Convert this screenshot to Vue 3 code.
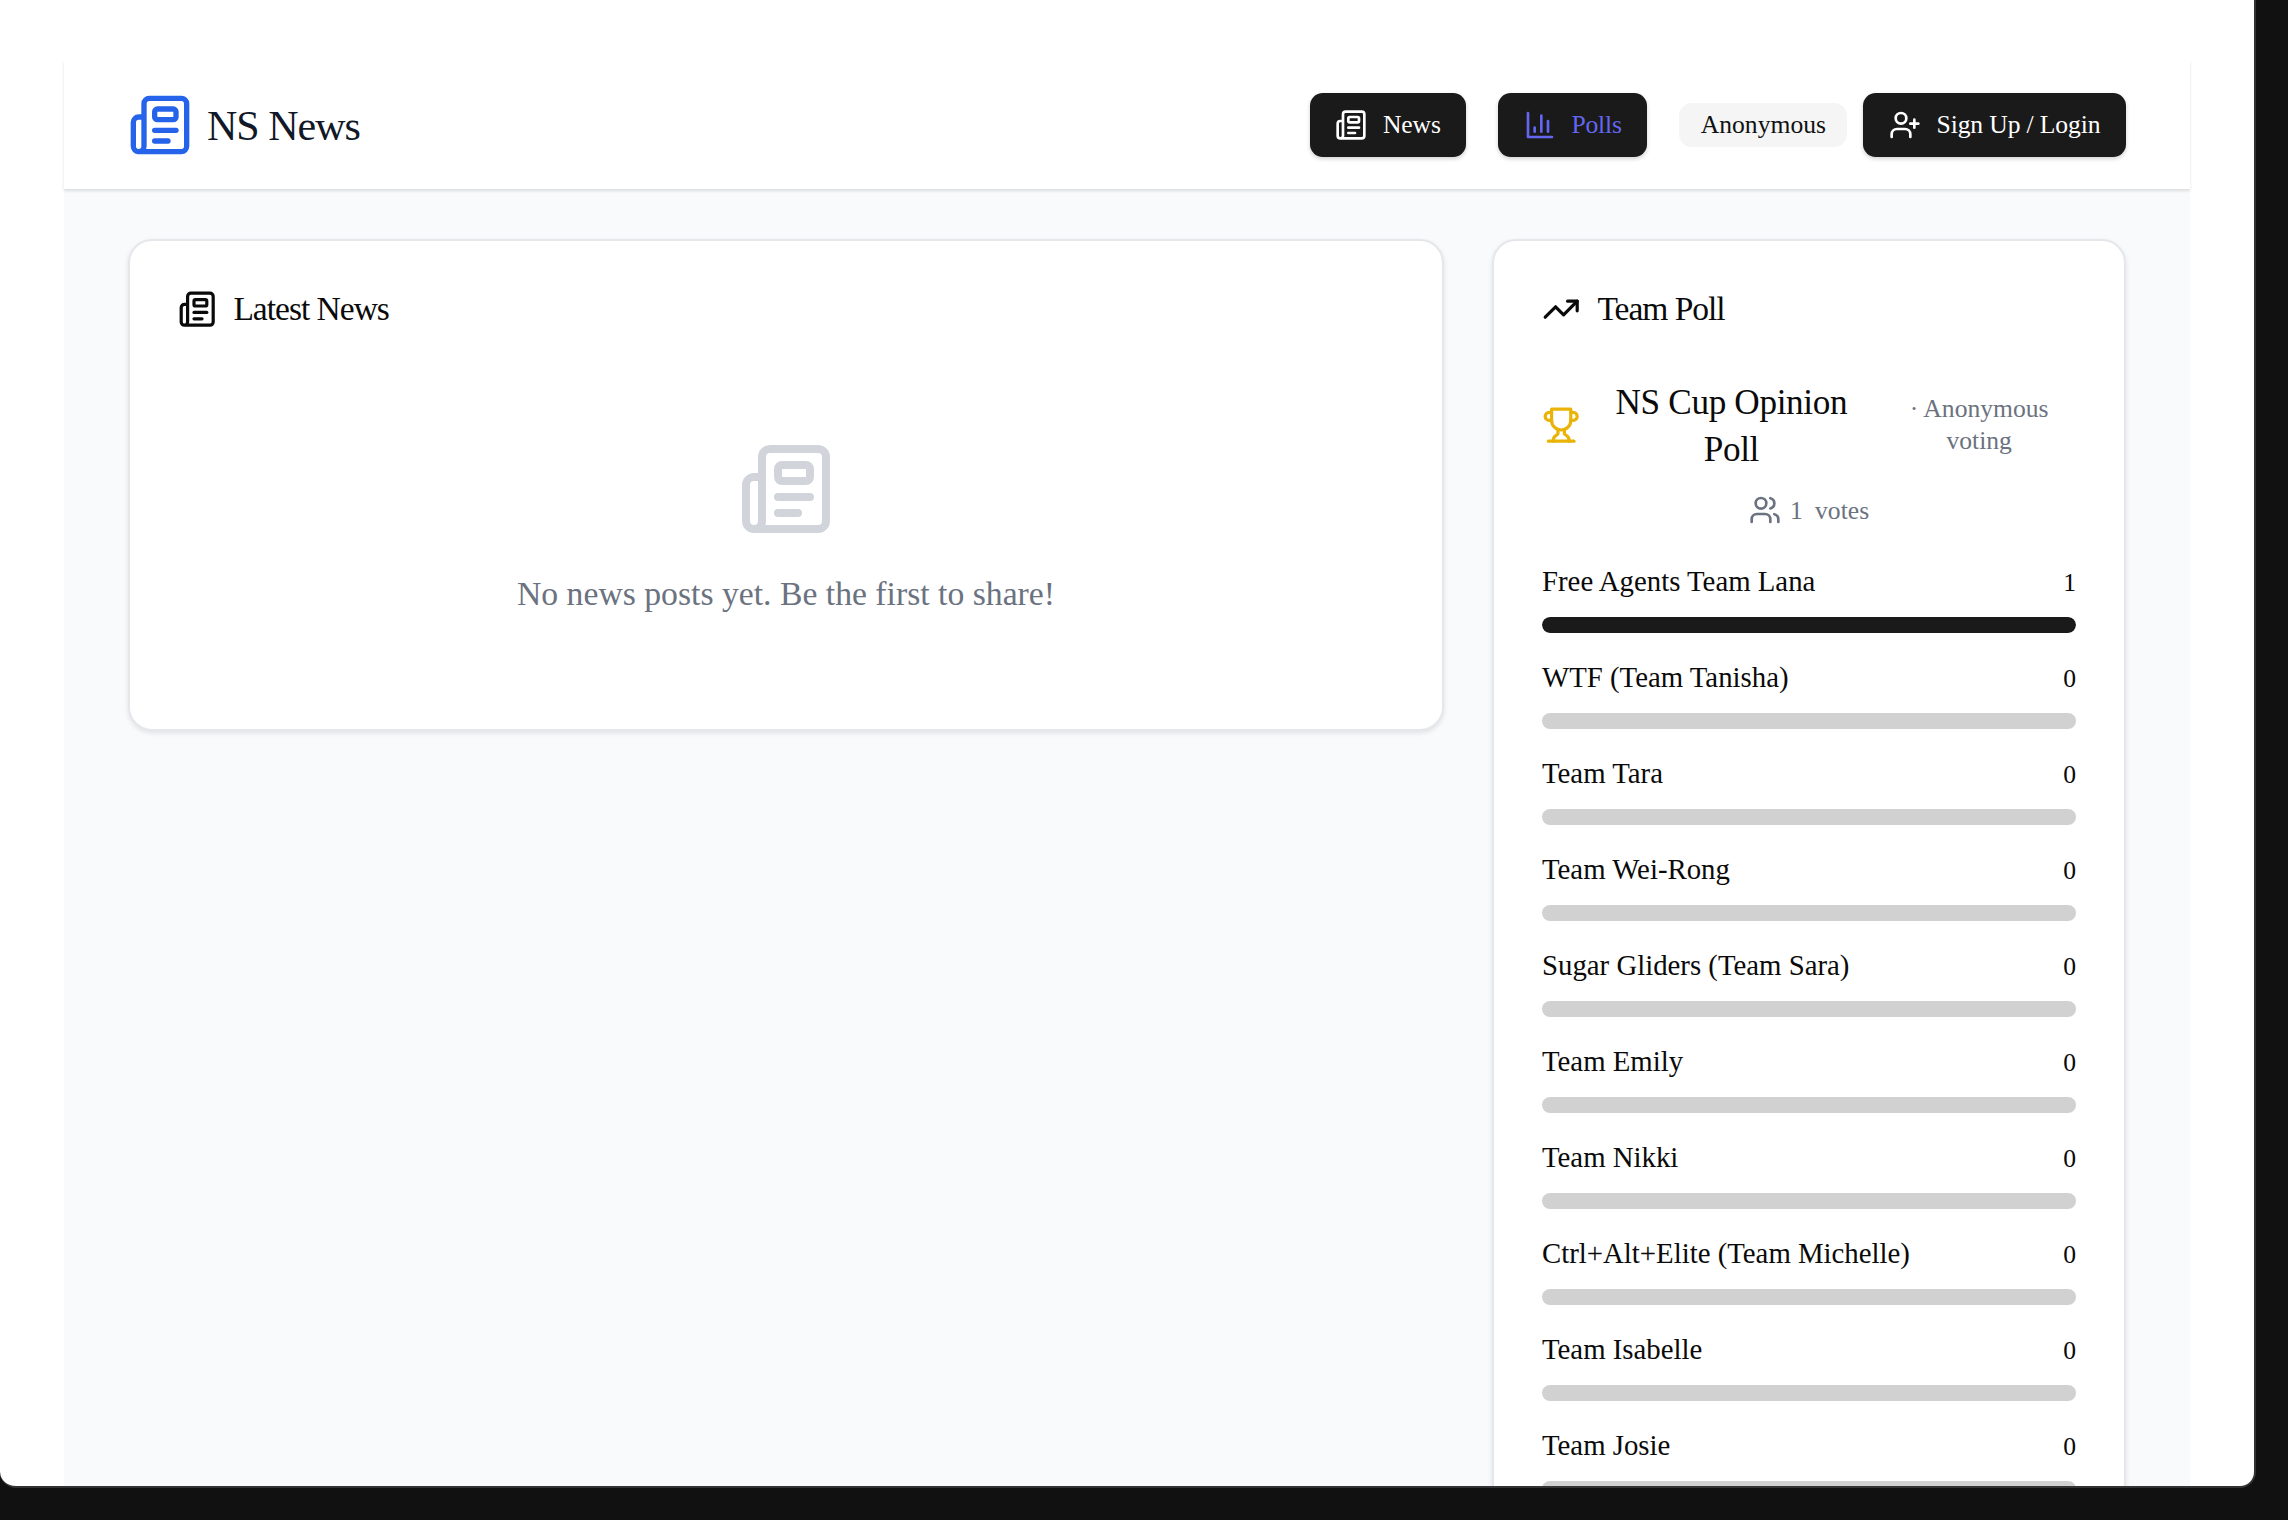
<script setup>
const teams = [
  { name: 'Free Agents Team Lana', votes: 1 },
  { name: 'WTF (Team Tanisha)', votes: 0 },
  { name: 'Team Tara', votes: 0 },
  { name: 'Team Wei-Rong', votes: 0 },
  { name: 'Sugar Gliders (Team Sara)', votes: 0 },
  { name: 'Team Emily', votes: 0 },
  { name: 'Team Nikki', votes: 0 },
  { name: 'Ctrl+Alt+Elite (Team Michelle)', votes: 0 },
  { name: 'Team Isabelle', votes: 0 },
  { name: 'Team Josie', votes: 0 }
]
const totalVotes = teams.reduce((sum, t) => sum + t.votes, 0)
</script>

<template>
  <div class="screen">
    <div class="app">
      <header class="topbar">
        <div class="brand">
          <svg class="icon logo" viewBox="0 0 24 24">
            <path d="M15 18h-5" /><path d="M18 14h-8" />
            <path d="M4 22h16a2 2 0 0 0 2-2V4a2 2 0 0 0-2-2H8a2 2 0 0 0-2 2v16a2 2 0 0 1-4 0v-9a2 2 0 0 1 2-2h2" />
            <rect width="8" height="4" x="10" y="6" rx="1" />
          </svg>
          <span class="brand-name">NS News</span>
        </div>
        <nav class="nav">
          <a class="nav-btn">
            <svg class="icon btn-icon" viewBox="0 0 24 24">
              <path d="M15 18h-5" /><path d="M18 14h-8" />
              <path d="M4 22h16a2 2 0 0 0 2-2V4a2 2 0 0 0-2-2H8a2 2 0 0 0-2 2v16a2 2 0 0 1-4 0v-9a2 2 0 0 1 2-2h2" />
              <rect width="8" height="4" x="10" y="6" rx="1" />
            </svg>
            News
          </a>
          <a class="nav-btn active">
            <svg class="icon btn-icon" viewBox="0 0 24 24">
              <path d="M3 3v18h18" /><path d="M18 17V9" /><path d="M13 17V5" /><path d="M8 17v-3" />
            </svg>
            Polls
          </a>
          <div class="user-area">
            <span class="chip">Anonymous</span>
            <a class="nav-btn">
              <svg class="icon btn-icon" viewBox="0 0 24 24">
                <path d="M16 21v-2a4 4 0 0 0-4-4H6a4 4 0 0 0-4 4v2" />
                <circle cx="9" cy="7" r="4" />
                <line x1="19" x2="19" y1="8" y2="14" /><line x1="22" x2="16" y1="11" y2="11" />
              </svg>
              Sign Up / Login
            </a>
          </div>
        </nav>
      </header>

      <main class="content">
        <section class="card">
          <h2 class="card-title">
            <svg class="icon title-icon" viewBox="0 0 24 24">
              <path d="M15 18h-5" /><path d="M18 14h-8" />
              <path d="M4 22h16a2 2 0 0 0 2-2V4a2 2 0 0 0-2-2H8a2 2 0 0 0-2 2v16a2 2 0 0 1-4 0v-9a2 2 0 0 1 2-2h2" />
              <rect width="8" height="4" x="10" y="6" rx="1" />
            </svg>
            Latest News
          </h2>
          <div class="empty">
            <svg class="icon empty-icon" viewBox="0 0 24 24">
              <path d="M15 18h-5" /><path d="M18 14h-8" />
              <path d="M4 22h16a2 2 0 0 0 2-2V4a2 2 0 0 0-2-2H8a2 2 0 0 0-2 2v16a2 2 0 0 1-4 0v-9a2 2 0 0 1 2-2h2" />
              <rect width="8" height="4" x="10" y="6" rx="1" />
            </svg>
            <p class="empty-text">No news posts yet. Be the first to share!</p>
          </div>
        </section>

        <section class="card poll-card">
          <h2 class="card-title">
            <svg class="icon title-icon" viewBox="0 0 24 24">
              <polyline points="22 7 13.5 15.5 8.5 10.5 2 17" /><polyline points="16 7 22 7 22 13" />
            </svg>
            Team Poll
          </h2>
          <div class="poll-head">
            <svg class="icon trophy" viewBox="0 0 24 24">
              <path d="M6 9H4.5a2.5 2.5 0 0 1 0-5H6" /><path d="M18 9h1.5a2.5 2.5 0 0 0 0-5H18" />
              <path d="M4 22h16" />
              <path d="M10 14.66V17c0 .55-.47.98-.97 1.21C7.85 18.75 7 20.24 7 22" />
              <path d="M14 14.66V17c0 .55.47.98.97 1.21C16.15 18.75 17 20.24 17 22" />
              <path d="M18 2H6v7a6 6 0 0 0 12 0V2Z" />
            </svg>
            <h3 class="poll-title">NS Cup Opinion Poll</h3>
            <span class="poll-note">· Anonymous voting</span>
          </div>
          <div class="poll-votes">
            <svg class="icon btn-icon" viewBox="0 0 24 24">
              <path d="M16 21v-2a4 4 0 0 0-4-4H6a4 4 0 0 0-4 4v2" />
              <circle cx="9" cy="7" r="4" />
              <path d="M22 21v-2a4 4 0 0 0-3-3.87" /><path d="M16 3.13a4 4 0 0 1 0 7.75" />
            </svg>
            <span>{{ totalVotes }} votes</span>
          </div>
          <ul class="teams">
            <li v-for="team in teams" :key="team.name" class="team">
              <div class="team-row">
                <span class="team-name">{{ team.name }}</span>
                <span class="team-count">{{ team.votes }}</span>
              </div>
              <div class="bar">
                <div class="bar-fill" :style="{ width: (team.votes / totalVotes) * 100 + '%' }"></div>
              </div>
            </li>
          </ul>
        </section>
      </main>
    </div>
  </div>
</template>

<style>
html, body {
  margin: 0;
  height: 100%;
  overflow: hidden;
  background: #111111;
}
</style>

<style scoped>
.screen {
  box-sizing: content-box;
  width: 2254px;
  height: 1486px;
  background: #ffffff;
  border-right: 2px solid #333333;
  border-bottom: 2px solid #333333;
  border-radius: 0 0 16px 16px;
  overflow: hidden;
  font-family: "Liberation Serif", "Times New Roman", serif;
  color: #111111;
}

.app {
  margin: 60px 64px 0;
  height: 1426px;
  background: #f9fafb;
}

.icon {
  fill: none;
  stroke: currentColor;
  stroke-width: 2;
  stroke-linecap: round;
  stroke-linejoin: round;
  flex-shrink: 0;
}

.topbar {
  box-sizing: border-box;
  height: 129px;
  padding: 1px 64px 0;
  display: flex;
  align-items: center;
  justify-content: space-between;
  background: #ffffff;
  box-shadow: 0 2px 3px rgba(0, 0, 0, 0.12);
  position: relative;
}

.brand {
  display: flex;
  align-items: center;
  gap: 15px;
}

.logo {
  width: 64px;
  height: 64px;
  color: #2563eb;
}

.brand-name {
  margin-top: 2px;
  font-size: 42px;
  letter-spacing: -1px;
  color: #111827;
}

.nav {
  display: flex;
  align-items: center;
  gap: 32px;
}

.user-area {
  display: flex;
  align-items: center;
  gap: 16px;
}

.nav-btn {
  height: 64px;
  padding: 0 25.6px;
  display: flex;
  align-items: center;
  gap: 15.5px;
  background: #1a1a1a;
  color: #ffffff;
  border-radius: 12.8px;
  font-size: 25.6px;
  letter-spacing: -0.12px;
  box-shadow: 0 2px 4px rgba(0, 0, 0, 0.18);
}

.nav-btn.active {
  color: #6366f1;
  letter-spacing: -0.2px;
}

.btn-icon {
  width: 32px;
  height: 32px;
}

.chip {
  height: 44px;
  padding: 0 21.5px;
  display: flex;
  align-items: center;
  background: #f5f5f5;
  border-radius: 12.8px;
  font-size: 25.6px;
}

.content {
  display: grid;
  grid-template-columns: 1fr 634px;
  gap: 48px;
  align-items: start;
  padding: 50px 64px 0;
}

.card {
  box-sizing: border-box;
  background: #ffffff;
  border: 2px solid #e5e7eb;
  border-radius: 24px;
  padding: 48px;
  box-shadow: 0 2px 5px rgba(0, 0, 0, 0.1);
}

.card-title {
  margin: 0;
  height: 40px;
  display: flex;
  align-items: center;
  gap: 17px;
  font-size: 33.5px;
  font-weight: 400;
  letter-spacing: -1px;
  color: #0a0a0a;
}

.title-icon {
  width: 38.4px;
  height: 38.4px;
}

.empty {
  padding: 112px 0 63px;
  display: flex;
  flex-direction: column;
  align-items: center;
}

.empty-icon {
  width: 96px;
  height: 96px;
  color: #d1d5db;
}

.empty-text {
  margin: 33px 0 0;
  font-size: 33.7px;
  line-height: 48px;
  color: #6b7280;
}

.poll-head {
  margin-top: 48px;
  display: flex;
  align-items: center;
  gap: 16px;
}

.trophy {
  width: 38.4px;
  height: 38.4px;
  color: #eab308;
}

.poll-title {
  flex: 0 0 270px;
  margin: 0;
  padding-top: 2px;
  font-size: 35.2px;
  line-height: 47px;
  font-weight: 400;
  letter-spacing: -0.35px;
  text-align: center;
  color: #0a0a0a;
}

.poll-note {
  flex: 1;
  font-size: 25.6px;
  line-height: 32px;
  text-align: center;
  color: #6b7280;
}

.poll-votes {
  margin-top: 19px;
  height: 38px;
  display: flex;
  align-items: center;
  justify-content: center;
  gap: 9px;
  font-size: 25.6px;
  color: #6b7280;
  word-spacing: 6px;
}

.poll-votes .btn-icon {
  margin-top: -3px;
}

.teams {
  list-style: none;
  margin: 31px 0 0;
  padding: 0;
  display: flex;
  flex-direction: column;
  gap: 24px;
}

.team-row {
  height: 40px;
  margin-bottom: 16px;
  display: flex;
  align-items: baseline;
  justify-content: space-between;
  line-height: 40px;
}

.team-name {
  font-size: 28.8px;
  color: #0a0a0a;
}

.team-count {
  font-size: 25.6px;
  color: #0a0a0a;
}

.bar {
  height: 16px;
  background: #d1d1d1;
  border-radius: 8px;
  overflow: hidden;
}

.bar-fill {
  height: 100%;
  background: #1a1a1a;
  border-radius: 8px;
}
</style>
